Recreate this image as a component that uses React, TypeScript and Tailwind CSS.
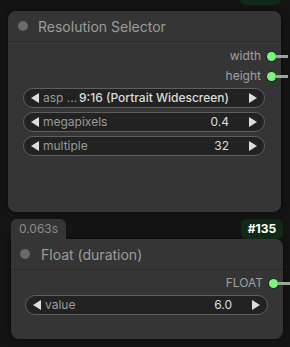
const LeftArrow = () => (
  <svg width="8" height="10" viewBox="0 0 8 10" className="shrink-0">
    <polygon points="8,0 8,10 0,5" fill="#dddddd" />
  </svg>
);

const RightArrow = () => (
  <svg width="8" height="10" viewBox="0 0 8 10" className="shrink-0">
    <polygon points="0,0 0,10 8,5" fill="#dddddd" />
  </svg>
);

const Widget = ({ label, value, bold }: { label: string; value: string; bold?: boolean }) => (
  <div className="h-[20px] rounded-full bg-[#222222] border border-[#5f5f5f] flex items-center pl-[7px] pr-[7px] text-[12px] leading-none">
    <LeftArrow />
    <span className="ml-[4px] text-[#9a9a9a] whitespace-nowrap">{label}</span>
    <span className={"ml-auto mr-[20px] text-[#dddddd] whitespace-nowrap " + (bold ? "font-medium" : "")}>{value}</span>
    <RightArrow />
  </div>
);

const Output = ({ label, dotRight }: { label: string; dotRight: string }) => (
  <div className="relative h-[20px] flex items-center justify-end text-[12px] text-[#a0a0a0]">
    <span>{label}</span>
    <span className={"ml-[6px] w-[9px] h-[9px] rounded-full bg-[#7df57d] ring-1 ring-[#1e2e1e] " + dotRight} />
    <span className="absolute left-full top-[9px] w-[12px] h-[3px] bg-[#9aa898]" />
  </div>
);

export default function App() {
  return (
    <div className="w-[290px] h-[347px] bg-[#141414] overflow-hidden font-['Inter',sans-serif]">
      <div className="flex justify-end pr-[9px] -mt-[15px]">
        <div className="h-[20px] w-[41px] rounded-[6px] bg-[#112a17] text-white font-bold text-[12px] flex items-center justify-center">
          #115
        </div>
      </div>

      <div className="ml-[8px] mt-[6px] w-[273px] h-[201px] rounded-[8px] bg-[#353535] shadow-[0_0_6px_rgba(0,0,0,0.5)]">
        <div className="h-[31px] flex items-center border-b border-[#2a2a2a] pl-[10px]">
          <span className="w-[10px] h-[10px] rounded-full bg-[#6a6a6a]" />
          <span className="ml-[10px] text-[14px] text-[#9c9c9c]">Resolution Selector</span>
        </div>
        <div className="pt-[4px] pr-[5px]">
          <Output label="width" dotRight="mr-[0px]" />
          <Output label="height" dotRight="mr-[0px]" />
        </div>
        <div className="mt-[2px] pl-[15px] pr-[16px] flex flex-col gap-[4px]">
          <Widget label="asp ..." value="9:16 (Portrait Widescreen)" bold />
          <Widget label="megapixels" value="0.4" />
          <Widget label="multiple" value="32" />
        </div>
      </div>

      <div className="mt-[7px] flex justify-between pl-[11px] pr-[7px]">
        <div className="h-[20px] w-[55px] rounded-t-[6px] bg-[#353535] text-[#8a8a8a] text-[12px] flex items-center justify-center">
          0.063s
        </div>
        <div className="h-[20px] w-[42px] rounded-[6px] bg-[#112a17] text-white font-bold text-[12px] flex items-center justify-center">
          #135
        </div>
      </div>

      <div className="ml-[11px] w-[272px] h-[100px] rounded-[8px] rounded-tl-none bg-[#353535] shadow-[0_0_6px_rgba(0,0,0,0.5)]">
        <div className="h-[31px] flex items-center border-b border-[#2a2a2a] pl-[9px]">
          <span className="w-[10px] h-[10px] rounded-full bg-[#6a6a6a]" />
          <span className="ml-[11px] text-[14px] text-[#9c9c9c]">Float (duration)</span>
        </div>
        <div className="pt-[3px] pr-[5px]">
          <Output label="FLOAT" dotRight="mr-[0px]" />
        </div>
        <div className="mt-[2px] pl-[14px] pr-[15px]">
          <Widget label="value" value="6.0" />
        </div>
      </div>
    </div>
  );
}
